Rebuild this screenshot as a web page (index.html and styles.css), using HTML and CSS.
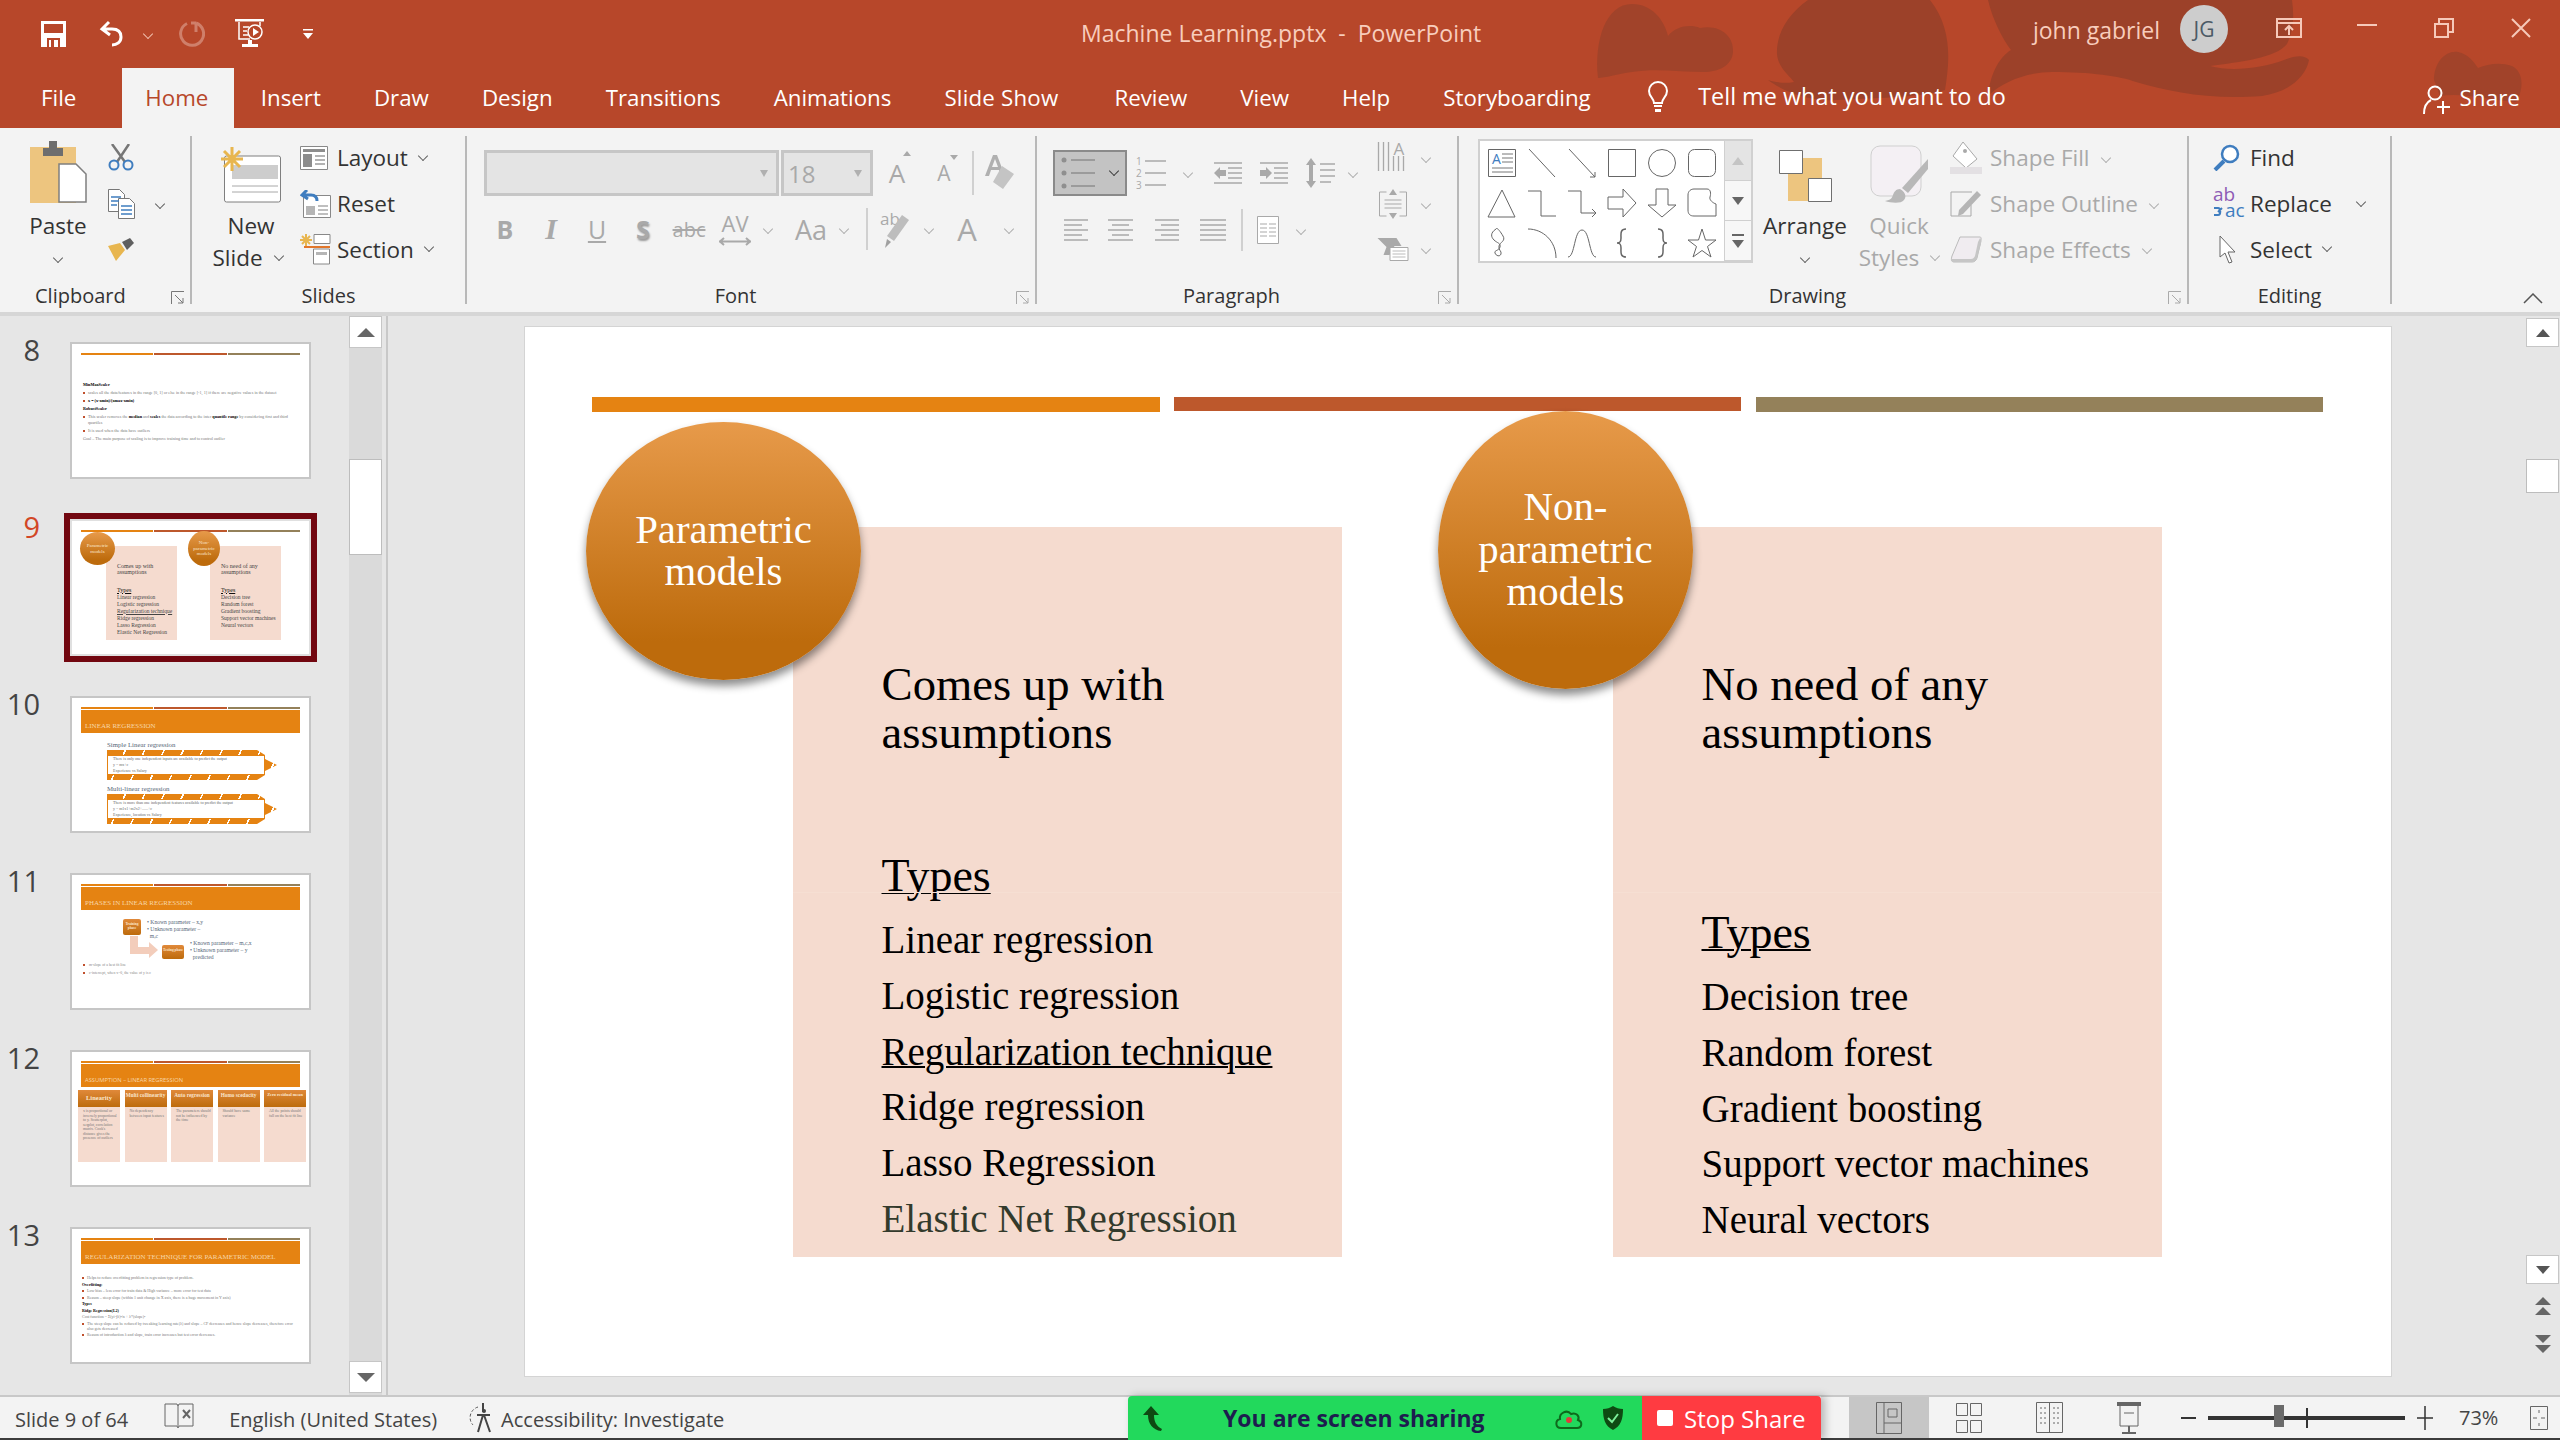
FILE: index.html
```html
<!DOCTYPE html>
<html>
<head>
  <title>Machine Learning.pptx - PowerPoint</title>
  <link rel="stylesheet" href="styles.css">
</head>
<body>
<div class="app">

  <!-- red header -->
  <header class="head">
    <svg class="head-art" width="2560" height="128" viewBox="0 0 2560 128">
      <path fill="#a1432a" d="M1598 78C1594 40 1606 4 1632 4C1652 4 1664 20 1668 36C1676 26 1690 24 1700 28C1720 24 1734 36 1733 52C1732 66 1718 72 1704 72C1680 72 1656 68 1632 72C1618 74 1604 78 1598 78Z"/>
      <path fill="#9c4129" d="M1808 0C1788 14 1776 34 1777 54C1778 68 1790 76 1794 82C1784 84 1774 82 1768 80C1784 92 1812 102 1836 100C1870 98 1918 98 1945 90C1950 60 1952 28 1930 0Z"/>
      <path fill="#9c4129" d="M1988 0C1992 18 2002 38 2011 50C1998 58 1990 76 1988 96C2004 80 2030 72 2052 72C2090 72 2120 76 2136 82C2170 92 2210 100 2262 96C2290 92 2306 76 2309 60C2304 54 2294 56 2284 60C2262 68 2232 72 2210 66C2240 62 2276 58 2287 44C2294 30 2294 14 2292 0Z"/>
      <path fill="#a1432a" d="M2434 80C2434 62 2446 50 2458 52C2468 54 2474 62 2478 68C2488 64 2500 62 2512 66C2524 72 2524 90 2516 102C2490 100 2462 92 2440 96Z"/>
    </svg>
    <div class="title-row">
      <div class="qat">
        <svg class="q-save" width="25" height="26" viewBox="0 0 25 26"><path fill="#fff" d="M0 0h25v26H0z"/><path fill="#b7472a" d="M3 3h19v9H3zM6 17h13v9h-2v-7H8v7H6z"/><path fill="#b7472a" d="M10 19h3v7h-3z"/></svg>
        <svg class="q-undo" width="26" height="27" viewBox="0 0 26 27"><path fill="none" stroke="#fff" stroke-width="3" d="M10 2 3 9l8 6M4 9h9c6 0 9 3 9 8s-4 8-9 8"/></svg>
        <i class="chev light q-chev"></i>
        <svg class="q-redo" width="27" height="27" viewBox="0 0 27 27"><path fill="none" stroke="#cf7f6a" stroke-width="3" d="M18 3a11.500 11.500 0 1 1-9 .5M18 3v9M18 3h-5"/></svg>
        <svg class="q-show" width="30" height="29" viewBox="0 0 30 29"><path fill="#fff" d="M0 0h29v2.500H0zM7 25h16v3H7zM13 21h4v5h-4z"/><path fill="none" stroke="#fff" stroke-width="1.500" d="M4 3v17h11M25 3v4M8 8h6M8 12h4M8 16h5"/><circle cx="20" cy="13" r="7" fill="#b7472a" stroke="#fff" stroke-width="1.500"/><path fill="#fff" d="m18 9 6 4-6 4z"/></svg>
        <svg class="q-more" width="10" height="10" viewBox="0 0 10 10"><path fill="#fff" d="M0 0h10v1.500H0zM0 4h10l-5 6z"/></svg>
      </div>
      <div class="doc-title">Machine Learning.pptx&nbsp; -&nbsp; PowerPoint</div>
      <div class="user-name">john gabriel</div>
      <div class="avatar">JG</div>
      <svg class="w-display" width="26" height="20" viewBox="0 0 26 20"><path fill="none" stroke="#f6c9b9" stroke-width="2" d="M1 1h24v18H1zM1 5h24M13 17V9M9 12l4-4 4 4"/></svg>
      <svg class="w-min" width="20" height="2" viewBox="0 0 20 2"><path fill="#f6c9b9" d="M0 0h20v2H0z"/></svg>
      <svg class="w-restore" width="20" height="20" viewBox="0 0 20 20"><path fill="none" stroke="#f6c9b9" stroke-width="2" d="M1 6h13v13H1zM5 6V1h14v13h-5"/></svg>
      <svg class="w-close" width="20" height="20" viewBox="0 0 20 20"><path stroke="#f6c9b9" stroke-width="2" d="m1 1 18 18M19 1 1 19"/></svg>
    </div>
    <nav class="tabs">
      <span class="tab tab-file">File</span>
      <span class="tab active">Home</span>
      <span class="tab">Insert</span>
      <span class="tab">Draw</span>
      <span class="tab">Design</span>
      <span class="tab">Transitions</span>
      <span class="tab">Animations</span>
      <span class="tab tab-show">Slide Show</span>
      <span class="tab">Review</span>
      <span class="tab">View</span>
      <span class="tab">Help</span>
      <span class="tab">Storyboarding</span>
      <svg class="bulb" width="20" height="31" viewBox="0 0 20 31"><path fill="none" stroke="#fff" stroke-width="2" d="M6 22c0-5-5-6-5-12a9 9 0 0 1 18 0c0 6-5 7-5 12z"/><path fill="#fff" d="M6 24h8v2H6zM7 28h6v3H7z"/></svg>
      <span class="tell">Tell me what you want to do</span>
      <svg class="share-ic" width="27" height="29" viewBox="0 0 27 29"><circle cx="12" cy="8" r="6.500" fill="none" stroke="#fff" stroke-width="2"/><path fill="none" stroke="#fff" stroke-width="2" d="M1 29c0-8 3-12 7-14M14 22h13M20 16v13"/></svg>
      <span class="share">Share</span>
    </nav>
  </header>

  <!-- ribbon -->
  <section class="ribbon">

    <div class="group g-clip">
      <div class="body">
        <div class="big big-paste">
          <div class="big-ic">
            <svg width="57" height="62" viewBox="0 0 57 62"><path fill="#edc57f" d="M0 6h46v56H0z"/><path fill="#6e6e6e" d="M13 7h20v8H13zM19 0h8v8h-8z"/><path fill="#fff" stroke="#7f7f7f" stroke-width="1.500" d="M29 23h17l10 10v28H29z"/></svg>
          </div>
          <div class="big-label">Paste</div>
          <div class="big-label"><i class="chev"></i></div>
        </div>
        <div class="rows">
          <div class="row"><svg class="ic-clip" width="26" height="27" viewBox="0 0 26 27"><path fill="none" stroke="#767676" stroke-width="2.500" d="M4 0l13 18M21 0 9 18"/><circle cx="6" cy="21" r="4.500" fill="none" stroke="#3f7dbf" stroke-width="2"/><circle cx="20" cy="21" r="4.500" fill="none" stroke="#3f7dbf" stroke-width="2"/></svg></div>
          <div class="row"><svg class="ic-clip" width="28" height="30" viewBox="0 0 28 30"><path fill="#fff" stroke="#777" d="M.5.500h11l5 5v17H.5z"/><path fill="#fff" stroke="#777" d="M10.500 9.500h11l5 5v15h-16z"/><path stroke="#3f7dbf" stroke-width="1.500" d="M3 8h10M3 12h8M3 16h6M13 17h11M13 21h11M13 25h11"/></svg><i class="chev chev-copy"></i></div>
          <div class="row"><svg class="ic-clip" width="27" height="23" viewBox="0 0 27 23"><path fill="#e8b64f" d="M0 8l12-3 5 7-9 11z"/><path fill="#5f5f5f" d="m14 4 8-4 4 5-7 7z"/></svg></div>
        </div>
      </div>
      <div class="label">Clipboard<svg class="launch" width="14" height="14" viewBox="0 0 14 14"><path fill="none" stroke="#777" d="M.5 13V.5H13M4 4l8 8M12 7v5H7"/></svg></div>
    </div>

    <div class="group g-slides">
      <div class="body">
        <div class="big big-new">
          <div class="big-ic">
            <svg width="62" height="56" viewBox="0 0 62 56"><rect x="4.500" y="9" width="56" height="46" rx="2" fill="#fff" stroke="#7f7f7f"/><path fill="#cdcdcd" d="M12 18h46v14H12z"/><path stroke="#a8a8a8" d="M12 39h46M12 45h46"/><path stroke="#e8b64f" stroke-width="3" d="M12 0v24M1 12h22M4 4l16 16M20 4 4 20"/></svg>
          </div>
          <div class="big-label">New</div>
          <div class="big-label">Slide<i class="chev chev-inl"></i></div>
        </div>
        <div class="rows">
          <div class="row"><span class="ic-box"><svg width="28" height="24" viewBox="0 0 28 24"><path fill="#fff" stroke="#888" d="M.5.500h27v23H.5z"/><path fill="#8d8d8d" d="M3 3h22v3H3zM3 8h9v13H3z"/><path stroke="#9a9a9a" stroke-width="1.500" d="M15 10h10M15 14h10M15 18h10"/></svg></span><span class="txt">Layout</span><i class="chev"></i></div>
          <div class="row"><span class="ic-box"><svg width="31" height="28" viewBox="0 0 31 28"><path fill="#fff" stroke="#888" d="M3.500 5.500h27v22h-27z"/><path fill="#b5b5b5" d="M6 16h9v9H6z"/><path stroke="#aaa" stroke-width="1.500" d="M18 16h10M18 20h10M18 24h10"/><path fill="none" stroke="#3f7dbf" stroke-width="3" d="M7 0 2 5l6 4M3 5h8c4 0 6 2 6 6"/></svg></span><span class="txt">Reset</span></div>
          <div class="row"><span class="ic-box"><svg width="31" height="31" viewBox="0 0 31 31"><path stroke="#e8b64f" stroke-width="2" d="M6 0v13M0 6h12M2 2l8 8M10 2 2 10"/><path fill="#fff" stroke="#888" d="M14 .5h16v9H14zM13.500 15h16v15h-16z"/><path fill="#b5b5b5" d="M16 18h11v3H16z"/><path stroke="#e2762a" stroke-width="2" d="M4 13h26"/></svg></span><span class="txt">Section</span><i class="chev"></i></div>
        </div>
      </div>
      <div class="label">Slides</div>
    </div>

    <div class="group g-font off">
      <div class="body">
        <div class="f-row f-top">
          <div class="combo c-font"><i class="tri"></i></div>
          <div class="combo c-size"><span>18</span><i class="tri"></i></div>
          <span class="f-a a-grow">A<i class="up"></i></span>
          <span class="f-a a-shrink">A<i class="dn"></i></span>
          <span class="vsep vs-top"></span>
          <svg class="a-clear" width="32" height="36" viewBox="0 0 32 36"><path fill="#b0b0b0" d="M11 0h4l8 21h-4l-2-6H9l-2 6H3zM10 12h6l-3-8z"/><path fill="#c4c4c4" d="M20 11l12 8-11 15-10-7z"/></svg>
        </div>
        <div class="f-row f-bot">
          <b class="fb">B</b><i class="fb fb-i">I</i><u class="fb">U</u><b class="fb fb-s">S</b><s class="fb fb-abc">abc</s>
          <span class="fb fb-av">AV<svg width="32" height="9" viewBox="0 0 32 9"><path fill="none" stroke="#a9a9a9" stroke-width="2" d="M0 4.500h32M5 1 1 4.500 5 8M27 1l4 3.500L27 8"/></svg></span>
          <i class="chev chev-f"></i>
          <span class="fb fb-aa">Aa</span>
          <i class="chev chev-f"></i>
          <span class="vsep vs-bot"></span>
          <svg class="fb-pen" width="30" height="38" viewBox="0 0 30 38"><text x="0" y="15" font-family="Open Sans" font-size="17" fill="#a9a9a9">ab</text><path fill="#bdbdbd" d="M22 5l7 5-15 21-7-5z"/><path fill="#a0a0a0" d="M7 29l4 3-6 6z"/></svg>
          <i class="chev chev-f chev-pen"></i>
          <span class="fb fb-a2">A</span>
          <i class="chev chev-f chev-pen"></i>
        </div>
      </div>
      <div class="label">Font<svg class="launch" width="14" height="14" viewBox="0 0 14 14"><path fill="none" stroke="#aaa" d="M.5 13V.5H13M4 4l8 8M12 7v5H7"/></svg></div>
    </div>

    <div class="group g-para off">
      <div class="body">
        <div class="p-left">
          <div class="p-row p-top">
            <div class="bullets">
              <svg width="40" height="34" viewBox="0 0 40 34"><circle cx="3" cy="4" r="2.500" fill="#8f8f8f"/><circle cx="3" cy="17" r="2.500" fill="#8f8f8f"/><circle cx="3" cy="30" r="2.500" fill="#8f8f8f"/><path stroke="#8f8f8f" stroke-width="1.500" d="M10 4h24M10 17h24M10 30h24"/></svg>
              <i class="chev chev-dark"></i>
            </div>
            <svg class="p-num" width="30" height="34" viewBox="0 0 30 34"><text x="0" y="9" font-family="Open Sans" font-size="10" fill="#a9a9a9">1</text><text x="0" y="21" font-family="Open Sans" font-size="10" fill="#a9a9a9">2</text><text x="0" y="33" font-family="Open Sans" font-size="10" fill="#a9a9a9">3</text><path stroke="#a9a9a9" stroke-width="1.500" d="M9 5h21M9 17h21M9 29h21"/></svg>
            <i class="chev chev-p c1"></i>
            <svg class="p-dec" width="28" height="22" viewBox="0 0 28 22"><path stroke="#a9a9a9" stroke-width="1.500" d="M0 1h28M14 6h14M14 11h14M14 16h14M0 21h28"/><path fill="#a9a9a9" d="M0 11l6-6v3h6v6H6v3z"/></svg>
            <svg class="p-inc" width="28" height="22" viewBox="0 0 28 22"><path stroke="#a9a9a9" stroke-width="1.500" d="M0 1h28M14 6h14M14 11h14M14 16h14M0 21h28"/><path fill="#a9a9a9" d="M12 11 6 5v3H0v6h6v3z"/></svg>
            <svg class="p-sp" width="29" height="30" viewBox="0 0 29 30"><path fill="#a9a9a9" d="M5 0l5 7H7v16h3l-5 7-5-7h3V7H0z"/><path stroke="#a9a9a9" stroke-width="1.500" d="M14 6h15M14 12h15M14 18h15M14 24h11"/></svg>
            <i class="chev chev-p c2"></i>
          </div>
          <div class="p-row p-bot">
            <svg class="al a1" width="24" height="22" viewBox="0 0 24 22"><path stroke="#a9a9a9" stroke-width="1.500" d="M0 1h24M0 6h18M0 11h24M0 16h18M0 21h24"/></svg>
            <svg class="al a2" width="25" height="22" viewBox="0 0 25 22"><path stroke="#a9a9a9" stroke-width="1.500" d="M0 1h25M4 6h17M0 11h25M4 16h17M0 21h25"/></svg>
            <svg class="al a3" width="24" height="22" viewBox="0 0 24 22"><path stroke="#a9a9a9" stroke-width="1.500" d="M0 1h24M6 6h18M0 11h24M6 16h18M0 21h24"/></svg>
            <svg class="al a4" width="26" height="22" viewBox="0 0 26 22"><path stroke="#a9a9a9" stroke-width="1.500" d="M0 1h26M0 6h26M0 11h26M0 16h26M0 21h26"/></svg>
            <span class="vsep vs-p"></span>
            <svg class="al a5" width="22" height="28" viewBox="0 0 22 28"><path fill="#fff" stroke="#a9a9a9" d="M.5.500h21v27H.5z"/><path stroke="#a9a9a9" d="M3 8h7M3 12h7M3 16h7M3 20h7M12 8h7M12 12h7M12 16h7M12 20h7"/></svg>
            <i class="chev chev-p c3"></i>
          </div>
        </div>
        <div class="rows p-rows">
          <div class="row"><svg class="ic-p" width="31" height="32" viewBox="0 0 31 32"><path stroke="#a9a9a9" stroke-width="1.300" d="M1 0v29M6 0v29M11 0v29M16 14v15M21 14v15M26 14v15"/><text x="16" y="13" font-family="Open Sans" font-size="17" fill="#a9a9a9">A</text></svg><i class="chev chev-pr"></i></div>
          <div class="row"><svg class="ic-p" width="29" height="30" viewBox="0 0 29 30"><path fill="none" stroke="#a9a9a9" d="M8 3H1v24h7M21 3h7v24h-7"/><path stroke="#a9a9a9" d="M6 11h17M6 15h17M6 19h17"/><path fill="#a9a9a9" d="m14.500 0 4 6h-8zM14.500 30l4-6h-8z"/></svg><i class="chev chev-pr"></i></div>
          <div class="row"><svg class="ic-p" width="31" height="23" viewBox="0 0 31 23"><path fill="#a9a9a9" d="M0 0h19l5 8h-7l-5 9H6l3-8z"/><path fill="#fff" stroke="#a9a9a9" d="M12.500 9.500h18v13h-18z"/><path stroke="#bbb" d="M15 13h13M15 16h13M15 19h13"/></svg><i class="chev chev-pr"></i></div>
        </div>
      </div>
      <div class="label">Paragraph<svg class="launch" width="14" height="14" viewBox="0 0 14 14"><path fill="none" stroke="#aaa" d="M.5 13V.5H13M4 4l8 8M12 7v5H7"/></svg></div>
    </div>

    <div class="group g-draw">
      <div class="body">
        <div class="gallery">
          <div class="shapes">
            <svg class="sh" viewBox="0 0 30 30"><path fill="#fff" stroke="#666" d="M1.500 1.500h27v27h-27z"/><text x="5" y="16" font-family="Open Sans" font-size="14" fill="#3f7dbf">A</text><path stroke="#777" d="M15 6h11M15 10h11M15 14h11M5 20h21M5 24h21"/></svg>
            <svg class="sh" viewBox="0 0 30 30"><path stroke="#666" d="m2 1 26 28"/></svg>
            <svg class="sh" viewBox="0 0 30 30"><path fill="none" stroke="#666" d="m2 1 26 28M28 24v5h-5"/></svg>
            <svg class="sh" viewBox="0 0 30 30"><path fill="none" stroke="#666" d="M1.500 1.500h27v27h-27z"/></svg>
            <svg class="sh" viewBox="0 0 30 30"><circle cx="15" cy="15" r="13.500" fill="none" stroke="#666"/></svg>
            <svg class="sh" viewBox="0 0 30 30"><rect x="1.500" y="1.500" width="27" height="27" rx="6" fill="none" stroke="#666"/></svg>
            <svg class="sh" viewBox="0 0 30 30"><path fill="none" stroke="#666" d="M15 2 28 29H1z"/></svg>
            <svg class="sh" viewBox="0 0 30 30"><path fill="none" stroke="#666" d="M1 3h13v25h15"/></svg>
            <svg class="sh" viewBox="0 0 30 30"><path fill="none" stroke="#666" d="M1 3h13v22h15M25 21l4 4-4 4"/></svg>
            <svg class="sh" viewBox="0 0 30 30"><path fill="none" stroke="#666" d="M1 9h15V1l13 14-13 14v-8H1z"/></svg>
            <svg class="sh" viewBox="0 0 30 30"><path fill="none" stroke="#666" d="M9 1h12v16h8L15 29 1 17h8z"/></svg>
            <svg class="sh" viewBox="0 0 30 30"><path fill="none" stroke="#666" d="M7 1h13c4 0 4 5 3 8s3 6 6 7v12H7c-4 0-6-2-6-6V7c0-4 3-6 6-6z"/></svg>
            <svg class="sh" viewBox="0 0 30 30"><path fill="none" stroke="#666" d="M9 1c-6 4-5 8-2 11s7 3 6 7-6 3-5 6 5 4 6 1-3-4-2-8 7-5 4-10-6-9-7-7z"/></svg>
            <svg class="sh" viewBox="0 0 30 30"><path fill="none" stroke="#666" d="M1 1c15 0 28 12 28 29"/></svg>
            <svg class="sh" viewBox="0 0 30 30"><path fill="none" stroke="#666" d="M1 29C8 29 7 2 15 2s7 27 14 27"/></svg>
            <svg class="sh" viewBox="0 0 30 30"><path fill="none" stroke="#666" stroke-width="1.500" d="M19 1c-6 0-5 5-5 9s-1 5-4 5c3 0 4 1 4 5s-1 9 5 9"/></svg>
            <svg class="sh" viewBox="0 0 30 30"><path fill="none" stroke="#666" stroke-width="1.500" d="M11 1c6 0 5 5 5 9s1 5 4 5c-3 0-4 1-4 5s1 9-5 9"/></svg>
            <svg class="sh" viewBox="0 0 30 30"><path fill="none" stroke="#666" d="m15 1 3.500 11H29l-8.500 6.500L24 29l-9-6.500L6 29l3.500-10.500L1 12h10.500z"/></svg>
          </div>
          <div class="g-scroll">
            <span class="gs gs-up"><svg width="12" height="8" viewBox="0 0 12 8"><path fill="#c4c4c4" d="M0 8 6 0l6 8z"/></svg></span>
            <span class="gs"><svg width="12" height="8" viewBox="0 0 12 8"><path fill="#666" d="m0 0 6 8 6-8z"/></svg></span>
            <span class="gs"><svg width="12" height="14" viewBox="0 0 12 14"><path fill="#666" d="M0 0h12v2H0zM0 6h12l-6 8z"/></svg></span>
          </div>
        </div>
        <div class="big big-arr">
          <div class="big-ic">
            <svg width="55" height="54" viewBox="0 0 55 54"><path fill="#edc57f" d="M24 9h20v25H24zM10 25h21v27H10z"/><path fill="#fff" stroke="#6f6f6f" d="M1.500 1.500h23v23h-23zM30.500 29.500h23v23h-23z"/></svg>
          </div>
          <div class="big-label">Arrange</div>
          <div class="big-label"><i class="chev"></i></div>
        </div>
        <div class="big big-quick off">
          <div class="big-ic">
            <svg width="58" height="58" viewBox="0 0 58 58"><rect x="1" y="1" width="50" height="50" rx="9" fill="#f4f0f4" stroke="#cfcfcf"/><path fill="#b8b8b8" d="M58 14v10L38 48l-6-5z"/><path fill="#b8b8b8" d="M30 44c5 3 7 7 4 11s-13 3-19 1c6-1 7-3 8-6s3-6 7-6z"/></svg>
          </div>
          <div class="big-label">Quick</div>
          <div class="big-label">Styles<i class="chev chev-inl"></i></div>
        </div>
        <div class="rows r-shape off">
          <div class="row"><span class="ic-box2"><svg width="32" height="33" viewBox="0 0 32 33"><path fill="#fff" stroke="#a9a9a9" d="M13 1l14 17-11 9L3 15z"/><circle cx="15" cy="10" r="2" fill="#a9a9a9"/><path fill="#e3e0e3" d="M0 26h32v7H0z"/></svg></span><span class="txt">Shape Fill</span><i class="chev c-fill"></i></div>
          <div class="row"><span class="ic-box2"><svg width="32" height="26" viewBox="0 0 32 26"><path fill="none" stroke="#a9a9a9" d="M22 1H1v24h20V14"/><path fill="#b5b5b5" d="M27 0l4 4-18 19-5 2 1-6z"/></svg></span><span class="txt">Shape Outline</span><i class="chev c-out"></i></div>
          <div class="row"><span class="ic-box2"><svg width="32" height="27" viewBox="0 0 32 27"><path fill="#f0ecf0" stroke="#bbb" d="M10 1h20c2 0 1 4 0 8l-3 13c-1 3-3 4-5 4H4c-3 0-3-3-2-6z"/><path fill="#c6c6c6" d="M30 2c2 2 1 6 0 9l-3 11c-1 3-3 4-5 4H4c-2 0-3-1-3-3h20c2 0 3-1 4-3l3-14z"/></svg></span><span class="txt">Shape Effects</span><i class="chev c-eff"></i></div>
        </div>
      </div>
      <div class="label">Drawing<svg class="launch" width="14" height="14" viewBox="0 0 14 14"><path fill="none" stroke="#aaa" d="M.5 13V.5H13M4 4l8 8M12 7v5H7"/></svg></div>
    </div>

    <div class="group g-edit">
      <div class="body">
        <div class="rows">
          <div class="row"><span class="ic-box3"><svg width="27" height="27" viewBox="0 0 27 27"><circle cx="17" cy="10" r="8" fill="#fff" stroke="#3f7dbf" stroke-width="2.500"/><path stroke="#3f7dbf" stroke-width="4" d="M11 17 2 26"/></svg></span><span class="txt">Find</span></div>
          <div class="row"><span class="ic-box3 abac"><b class="ab">ab</b><svg width="11" height="11" viewBox="0 0 11 11"><path fill="none" stroke="#3f7dbf" stroke-width="2" d="M1 2h4c3 0 3 7 0 7H1M5 6l4-4"/></svg><b class="ac">ac</b></span><span class="txt">Replace</span><i class="chev c-rep"></i></div>
          <div class="row"><span class="ic-box3"><svg class="ic-sel" width="18" height="29" viewBox="0 0 18 29"><path fill="#fff" stroke="#666" d="M1 1v21l5-4 4 10 3-1-4-10h7z"/></svg></span><span class="txt">Select</span><i class="chev c-sel"></i></div>
        </div>
      </div>
      <div class="label">Editing</div>
    </div>

    <svg class="collapse" width="20" height="11" viewBox="0 0 20 11"><path fill="none" stroke="#555" stroke-width="1.500" d="m1 10 9-9 9 9"/></svg>
  </section>

  <main class="main">

    <!-- slide thumbnails -->
    <aside class="panel">
      <div class="thumbs">

        <div class="t-row">
          <span class="num">8</span>
          <div class="thumb">
            <div class="t-bars"><i></i><i></i><i></i></div>
            <div class="t-text t8">
              <p><b>MinMaxScaler</b></p>
              <p class="dot">scales all the data/features in the range [0, 1] or else in the range [-1, 1] if there are negative values in the dataset</p>
              <p class="dot"><b>x = (x-xmin)/(xmax-xmin)</b></p>
              <p><b>RobustScaler</b></p>
              <p class="dot">This scaler removes the <b>median</b> and <b>scales</b> the data according to the inter <b>quantile range</b> by considering first and third quartiles</p>
              <p class="dot">It is used when the data have outliers</p>
              <p>Goal – The main purpose of scaling is to improve training time and to control outlier</p>
            </div>
          </div>
        </div>

        <div class="t-row">
          <span class="num cur">9</span>
          <div class="thumb selected">
            <div class="t-bars"><i></i><i></i><i></i></div>
            <div class="m-pink mp1">
              <p class="m-big">Comes up with<br>assumptions</p>
              <p class="m-type m-t1">Types</p>
              <p>Linear regression</p><p>Logistic regression</p><p><u>Regularization technique</u></p><p>Ridge regression</p><p>Lasso Regression</p><p>Elastic Net Regression</p>
            </div>
            <div class="m-pink mp2">
              <p class="m-big">No need of any<br>assumptions</p>
              <p class="m-type m-t2">Types</p>
              <p>Decision tree</p><p>Random forest</p><p>Gradient boosting</p><p>Support vector machines</p><p>Neural vectors</p>
            </div>
            <div class="m-circle mc1">Parametric<br>models</div>
            <div class="m-circle mc2">Non-<br>parametric<br>models</div>
          </div>
        </div>

        <div class="t-row">
          <span class="num">10</span>
          <div class="thumb">
            <div class="t-bars"><i></i><i></i><i></i></div>
            <div class="t-head">LINEAR REGRESSION</div>
            <div class="t10">
              <p class="t10-h">Simple Linear regression</p>
              <div class="band"><div class="band-in"><p>There is only one independent inputs are available to predict the output</p><p>y = mx+c</p><p>Experience vs Salary</p></div></div>
              <p class="t10-h t10-h2">Multi-linear regression</p>
              <div class="band band2"><div class="band-in"><p>There is more than one independent features available to predict the output</p><p>y = m1x1+m2x2+......+c</p><p>Experience, location vs Salary</p></div></div>
            </div>
          </div>
        </div>

        <div class="t-row">
          <span class="num">11</span>
          <div class="thumb">
            <div class="t-bars"><i></i><i></i><i></i></div>
            <div class="t-head">PHASES IN LINEAR REGRESSION</div>
            <div class="t11">
              <div class="t11-r"><span class="phase">Training phase</span><div class="t11-l"><p>• Known parameter – x,y</p><p>• Unknown parameter –<br>&nbsp;&nbsp;m,c</p></div></div>
              <div class="t11-r t11-r2"><svg width="28" height="22" viewBox="0 0 28 22"><path fill="#f3cdbb" d="M0 0h8v11h11V6l9 8-9 8v-4H0z"/></svg><span class="phase">Testing phase</span><div class="t11-l"><p>• Known parameter – m,c,x</p><p>• Unknown parameter – y<br>&nbsp;&nbsp;predicted</p></div></div>
              <p class="t11-n dot">m-slope of a best fit line</p>
              <p class="t11-n dot">c-intercept, when x=0, the value of y is c</p>
            </div>
          </div>
        </div>

        <div class="t-row">
          <span class="num">12</span>
          <div class="thumb">
            <div class="t-bars"><i></i><i></i><i></i></div>
            <div class="t-head t-head-sans">ASSUMPTION – LINEAR REGRESSION</div>
            <div class="t12">
              <div class="col"><h5 class="h-big">Linearity</h5><p>x is proportional or inversely proportional to y. Scatterplot, seqplot, correlation matrix. Cook's distance gives the presence of outliers</p></div>
              <div class="col"><h5>Multi collinearity</h5><p>No dependency between input features</p></div>
              <div class="col"><h5>Auto regression</h5><p>The parameters should not be influenced by the time</p></div>
              <div class="col"><h5>Homo scedacity</h5><p>Should have same variance</p></div>
              <div class="col"><h5 class="h-small">Zero residual mean</h5><p>All the points should fall on the best fit line</p></div>
            </div>
          </div>
        </div>

        <div class="t-row">
          <span class="num">13</span>
          <div class="thumb">
            <div class="t-bars"><i></i><i></i><i></i></div>
            <div class="t-head">REGULARIZATION TECHNIQUE FOR PARAMETRIC MODEL</div>
            <div class="t-text t13">
              <p class="dot">Helps to reduce overfitting problem in regression type of problem.</p>
              <p><b>Overfitting:</b></p>
              <p class="dot">Low bias – less error for train data &amp; High variance – more error for test data</p>
              <p class="dot">Reason – steep slope (within 1 unit change in X axis, there is a huge movement in Y axis)</p>
              <p><b>Types</b></p>
              <p><b>Ridge Regression(L2)</b></p>
              <p>Cost function = Σ(yi-ŷi)²/n + λ*(slope)²</p>
              <p class="dot">The steep slope can be reduced by tweaking learning rate(λ) and slope – CF decreases and hence slope decreases, therefore error also gets decreased</p>
              <p class="dot">Reason of introduction λ and slope, train error increases but test error decreases.</p>
            </div>
          </div>
        </div>

      </div>
      <div class="vbar">
        <span class="vb-btn"><svg width="18" height="9" viewBox="0 0 18 9"><path fill="#666" d="M0 9 9 0l9 9z"/></svg></span>
        <span class="vb-thumb"></span>
        <span class="vb-btn vb-down"><svg width="18" height="9" viewBox="0 0 18 9"><path fill="#666" d="m0 0 9 9 9-9z"/></svg></span>
      </div>
    </aside>

    <!-- current slide -->
    <div class="stage">
      <div class="slide">
        <div class="bars"><i class="b1"></i><i class="b2"></i><i class="b3"></i></div>

        <div class="pink pink-l">
          <p class="lead">Comes up with<br>assumptions</p>
          <p class="types">Types</p>
          <ul class="list">
            <li>Linear regression</li>
            <li>Logistic regression</li>
            <li><u>Regularization technique</u></li>
            <li>Ridge regression</li>
            <li>Lasso Regression</li>
            <li class="soft">Elastic Net Regression</li>
          </ul>
        </div>
        <div class="pink pink-r">
          <p class="lead">No need of any<br>assumptions</p>
          <p class="types">Types</p>
          <ul class="list">
            <li>Decision tree</li>
            <li>Random forest</li>
            <li>Gradient boosting</li>
            <li>Support vector machines</li>
            <li>Neural vectors</li>
          </ul>
        </div>

        <div class="circle circle-l">Parametric<br>models</div>
        <div class="circle circle-r">Non-<br>parametric<br>models</div>
      </div>

      <div class="sbar">
        <span class="sb-btn"><svg width="14" height="8" viewBox="0 0 14 8"><path fill="#555" d="M0 8 7 0l7 8z"/></svg></span>
        <span class="sb-thumb"></span>
        <span class="sb-btn sb-down"><svg width="14" height="8" viewBox="0 0 14 8"><path fill="#555" d="m0 0 7 8 7-8z"/></svg></span>
        <svg class="sb-pg" width="16" height="18" viewBox="0 0 16 18"><path fill="#666" d="M0 8 8 0l8 8zM0 18l8-8 8 8z"/></svg>
        <svg class="sb-pg sb-pg2" width="16" height="18" viewBox="0 0 16 18"><path fill="#666" d="m0 0 8 8 8-8zM0 10l8 8 8-8z"/></svg>
      </div>
    </div>
  </main>

  <footer class="status">
    <span class="st-count">Slide 9 of 64</span>
    <svg class="st-notes" width="30" height="28" viewBox="0 0 30 28"><path fill="none" stroke="#666" d="M1 2h12l1 2 1-2h14v22H15l-1 2-1-2H1zM14 4v20"/><path stroke="#666" stroke-width="2" d="m19 8 7 8M26 8l-7 8"/></svg>
    <span class="st-lang">English (United States)</span>
    <svg class="st-acc" width="29" height="30" viewBox="0 0 29 30"><path fill="none" stroke="#555" stroke-dasharray="3 2" d="M9 4a11 11 0 0 0-5 18"/><path stroke="#444" stroke-width="2" d="M14 0v9M8 12h13M14 12l-5 17M15 12l6 17"/><circle cx="15" cy="8" r="2" fill="#444"/></svg>
    <span class="st-acc-t">Accessibility: Investigate</span>

    <div class="views">
      <span class="view on"><svg width="26" height="32" viewBox="0 0 26 32"><path fill="none" stroke="#666" d="M.5.500h25v31H.5zM8 .5v31M8 21h18M12 7h9v8h-9z"/></svg></span>
      <span class="view"><svg width="26" height="30" viewBox="0 0 26 30"><path fill="none" stroke="#666" d="M.5.500h11v12H.5zM14.500.5h11v12h-11zM.5 17.500h11v12H.5zM14.500 17.500h11v12h-11z"/></svg></span>
      <span class="view"><svg width="27" height="32" viewBox="0 0 27 32"><path fill="none" stroke="#666" d="M.5.500h26v30h-26zM13.500.5v30"/><path stroke="#666" stroke-dasharray="2 2" d="M4 6h6M4 11h6M4 16h6M4 21h6M17 6h6M17 11h6M17 16h6M17 21h6"/></svg></span>
      <span class="view"><svg width="24" height="32" viewBox="0 0 24 32"><path fill="#666" d="M0 0h24v4H0zM5 30h14v2H5zM11 24h2v7h-2z"/><path fill="none" stroke="#666" d="M3 4v20h18V4M7 11h10"/></svg></span>
    </div>
    <div class="zoomer">
      <i class="z-minus"></i>
      <div class="z-track"><i class="z-thumb"></i><i class="z-tick"></i></div>
      <svg class="z-plus" width="16" height="24" viewBox="0 0 16 24"><path stroke="#333" stroke-width="1.500" d="M0 12h16M8 0v24"/></svg>
      <span class="z-pct">73%</span>
      <svg class="z-fit" width="18" height="24" viewBox="0 0 18 24"><path fill="none" stroke="#666" d="M.5.500h17v23H.5zM3 12h4M11 12h4M9 4v3M9 17v3"/></svg>
    </div>

    <!-- zoom share bar sits over the status bar -->
    <div class="sharebar">
      <div class="sb-green">
        <svg class="sg-arrow" width="20" height="25" viewBox="0 0 20 25"><path fill="#0e4a12" d="M8 0l8 9h-5c0 6 2 11 8 14l-1 2C10 24 5 18 5 9H0z"/></svg>
        <span class="sg-text">You are screen sharing</span>
        <svg class="sg-cloud" width="28" height="24" viewBox="0 0 28 24"><path fill="none" stroke="#0e6a1c" stroke-width="2" d="M6 22C0 22 0 14 5 13c-1-6 7-10 11-5 5-2 9 2 7 6 5 2 4 8-1 8z"/><circle cx="14" cy="14" r="3" fill="#e23a3a"/></svg>
        <svg class="sg-shield" width="20" height="24" viewBox="0 0 20 24"><path fill="#0e4a12" d="M10 0c3 2 6 3 10 3 0 10-2 17-10 21C2 20 0 13 0 3c4 0 7-1 10-3z"/><path fill="none" stroke="#7cf09a" stroke-width="2" d="m5 12 4 4 6-8"/></svg>
      </div>
      <div class="sb-red"><i class="stop-sq"></i><span>Stop Share</span></div>
    </div>
  </footer>
</div>
</body>
</html>
```

FILE: styles.css
```css
* { box-sizing: border-box; }
html, body { margin: 0; padding: 0; }
body { font-family: "Open Sans", sans-serif; background: #f3f3f3; color: #333; }
p, ul, h5 { margin: 0; padding: 0; }
i { font-style: normal; display: block; }

.app { width: 2560px; height: 1440px; overflow: hidden; display: flex; flex-direction: column; }

/* header */
.head { position: relative; height: 128px; background: #b7472a; }
.head-art { position: absolute; left: 0; top: 0; }
.title-row { position: relative; height: 68px; display: flex; align-items: center; }
.qat { width: 1081px; display: flex; align-items: center; padding-bottom: 1px; }
.q-save { margin-left: 41px; }
.q-undo { margin-left: 33px; }
.q-chev { margin-left: 19px; }
.q-redo { margin-left: 26px; }
.q-show { margin-left: 30px; }
.q-more { margin-left: 38px; }
.doc-title { font-size: 23px; color: #f8cdbd; white-space: nowrap; margin-top: -2px; }
.user-name { margin-left: auto; font-size: 23px; color: #f8cdbd; margin-top: -8px; }
.avatar { width: 48px; height: 48px; margin-left: 20px; border-radius: 50%; background: #cdcdcd; color: #4c5a66; font-size: 21px; display: flex; align-items: center; justify-content: center; margin-top: -10px; }
.w-display { margin-left: 48px; margin-top: -12px; }
.w-min { margin-left: 55px; margin-top: -18px; }
.w-restore { margin-left: 57px; margin-top: -12px; }
.w-close { margin-left: 57px; margin-right: 29px; margin-top: -12px; }

.tabs { position: relative; height: 60px; display: flex; align-items: stretch; color: #fff; font-size: 22.300px; }
.tab { padding: 0 26.500px; line-height: 60px; white-space: nowrap; }
.tab-file { margin-left: 14.500px; margin-right: 19.500px; }
.tab.active { background: #f3f3f3; color: #b7472a; padding: 0 26px 0 23px; }
.tab-show { margin-right: 3px; letter-spacing: .2px; }
.bulb { margin: 13px 0 0 31px; }
.tell { margin-left: 30px; font-size: 23.400px; line-height: 56px; white-space: nowrap; }
.share-ic { margin: 17px 0 0 auto; }
.share { margin: 0 40px 0 10px; line-height: 60px; font-size: 22.500px; }

/* ribbon */
.ribbon { position: relative; height: 188px; padding: 8px 0 0; display: flex; background: #f3f3f3; border-bottom: 4px solid #d6d6d6; font-size: 22.500px; color: #333; }
.group { position: relative; height: 168px; border-right: 2px solid #b8b8b8; display: flex; flex-direction: column; }
.g-clip { width: 192px; }
.g-slides { width: 275px; }
.g-font { width: 570px; }
.g-para { width: 422px; }
.g-draw { width: 730px; }
.g-edit { width: 203px; }
.body { height: 138px; display: flex; }
.label { position: relative; height: 30px; line-height: 44px; text-align: center; font-size: 20px; color: #333; white-space: nowrap; }
.launch { position: absolute; right: 5px; top: 17px; }
.g-clip .label { text-align: left; padding-left: 35px; }
.g-font .label, .g-para .label, .g-draw .label { padding-right: 31px; }

.chev { width: 8px; height: 8px; border-right: 1.500px solid #555; border-bottom: 1.500px solid #555; transform: rotate(45deg) scale(.9); flex: none; }
.chev.light { border-color: #f6c9b9; }
.off { color: #a9a9a9; }
.off .chev { border-color: #a9a9a9; }
.chev.chev-dark { border-color: #333; }
.chev-inl { display: inline-block; margin: 0 0 5px 12px; }

.big { display: flex; flex-direction: column; align-items: center; }
.big-ic { height: 75px; display: flex; align-items: flex-end; justify-content: center; padding-bottom: 7px; }
.big-label { height: 32px; line-height: 32px; display: flex; align-items: center; justify-content: center; white-space: nowrap; }
.big-paste, .big-new, .big-arr, .big-quick { margin-top: -1px; }
.big-paste { width: 84px; margin-left: 16px; }
.big-new { width: 84px; margin-left: 17px; }
.big-new .big-label:last-child { padding-right: 7px; }
.big-arr { width: 80px; margin-left: 12px; }
.big-quick { width: 80px; margin-left: 14px; }

.rows { display: flex; flex-direction: column; margin-top: -1px; }
.row { height: 45.700px; display: flex; align-items: center; white-space: nowrap; }
.g-clip .rows { margin-left: 8px; }
.chev-copy { margin-left: 20px; }
.g-slides .rows { margin-left: 7px; }
.ic-box { width: 37px; flex: none; display: flex; }
.g-slides .chev { margin-left: 11px; margin-bottom: 4px; }
.g-slides .big .chev { margin-left: 12px; margin-bottom: 5px; }

/* font group */
.f-row { display: flex; align-items: center; }
.g-font .body { flex-direction: column; }
.f-top { height: 46px; margin: 14px 0 0 17px; }
.combo { position: relative; height: 46px; background: #e4e4e4; border: 3px solid #c6c6c6; display: flex; align-items: center; }
.c-font { width: 295px; }
.c-size { width: 92px; margin-left: 2px; padding-left: 4px; font-size: 24px; }
.tri { position: absolute; right: 8px; top: 17px; border-top: 7px solid #b0b0b0; border-left: 4.500px solid transparent; border-right: 4.500px solid transparent; }
.f-a { position: relative; width: 44px; text-align: center; font-size: 26px; }
.a-grow { margin-left: 2px; }
.a-shrink { margin-left: 3px; font-size: 21px; }
.up, .dn { position: absolute; top: -4px; right: 8px; border-left: 4px solid transparent; border-right: 4px solid transparent; }
.up { border-bottom: 5px solid #a9a9a9; }
.dn { border-top: 5px solid #a9a9a9; }
.vsep { width: 2px; background: #d0d0d0; flex: none; }
.vs-top { height: 44px; margin-left: 6px; }
.a-clear { margin-left: 8px; }
.f-bot { height: 44px; margin: 11px 0 0 15px; }
.fb { width: 46px; text-align: center; font-size: 25px; flex: none; font-family: "Open Sans", sans-serif; }
.fb-i { display: inline; font-style: italic; font-family: "Liberation Serif", serif; font-size: 30px; font-weight: 700; }
.fb-s { text-shadow: 1px 2px 2px #999; }
.fb-abc { font-size: 20px; }
.fb-av { position: relative; font-size: 22px; line-height: 22px; padding-bottom: 12px; }
.fb-av svg { position: absolute; left: 7px; bottom: 0; }
.fb-aa { font-size: 27px; margin-left: 10px; }
.fb-a2 { font-size: 31px; margin-left: 5px; }
.chev-f { margin: 0 6px; }
.vs-bot { height: 42px; margin-left: 12px; }
.fb-pen { margin-left: 12px; }
.chev-pen { margin-left: 15px; }

/* paragraph group */
.p-left { width: 340px; padding-left: 16px; }
.p-row { display: flex; align-items: center; }
.p-top { height: 46px; margin-top: 14px; }
.bullets { width: 74px; height: 46px; background: #c3c3c3; border: 2px solid #8a8a8a; display: flex; align-items: center; padding-left: 6px; }
.bullets .chev { margin-left: 9px; margin-bottom: 4px; }
.p-num { margin-left: 9px; }
.chev-p { margin-left: 18px; }
.p-dec { margin-left: 22px; }
.p-inc { margin-left: 18px; }
.p-sp { margin-left: 18px; }
.chev.c2 { margin-left: 14px; }
.p-bot { height: 44px; margin-top: 12px; }
.a1 { margin-left: 11px; }
.a2 { margin-left: 20px; }
.a3 { margin-left: 22px; }
.a4 { margin-left: 21px; }
.vs-p { height: 42px; margin-left: 15px; }
.a5 { margin-left: 14px; }
.chev.c3 { margin-left: 18px; }
.ic-p { flex: none; }
.p-rows .ic-p { width: 32px; }
.chev-pr { margin-left: 13px; }

/* drawing group */
.g-draw .gallery { margin: 3px 0 0 19px; }
.gallery { width: 275px; height: 124px; display: flex; background: #fff; border: 2px solid #d0d0d0; flex: none; }
.shapes { width: 244px; padding: 2px 2px; display: grid; grid-template-columns: repeat(6, 40px); grid-auto-rows: 40px; place-items: center; }
.sh { width: 30px; height: 30px; }
.g-scroll { width: 27px; display: flex; flex-direction: column; background: #f3f3f3; }
.gs { height: 40px; display: flex; align-items: center; justify-content: center; border-left: 1px solid #d0d0d0; border-bottom: 1px solid #d0d0d0; background: #f7f7f7; }
.gs-up { background: #e4e4e4; }
.r-shape { margin-left: 11px; }
.ic-box2 { width: 40px; flex: none; display: flex; }
.c-fill { margin-left: 12px; }
.c-out { margin-left: 12px; }
.c-eff { margin-left: 12px; }

/* editing group */
.g-edit .rows { margin-left: 24px; }
.ic-box3 { width: 37px; flex: none; display: flex; justify-content: flex-start; }
.ic-sel { margin-left: 6px; }
.abac { position: relative; height: 30px; }
.abac b { position: absolute; font-weight: 400; line-height: 15px; font-size: 19px; }
.ab { left: 0; top: -2px; color: #8e5cb5; }
.ac { left: 12px; top: 14px; color: #3f7dbf; }
.abac svg { position: absolute; left: 0; top: 17px; }
.c-rep { margin-left: 25px; margin-bottom: 4px; }
.c-sel { margin-left: 11px; margin-bottom: 4px; }
.collapse { position: absolute; left: 2523px; top: 165px; }

/* main area */
.main { height: 1079px; display: flex; background: #e6e6e6; }
.panel { width: 388px; height: 100%; display: flex; border-right: 2px solid #c8c8c8; flex: none; }
.thumbs { width: 349px; padding-top: 26px; }
.t-row { position: relative; height: 177px; display: flex; }
.num { width: 70px; padding-right: 30px; text-align: right; font-size: 29px; line-height: 30px; color: #444; flex: none; margin-top: -7px; height: 40px; }
.num.cur { color: #d24726; }
.thumb { position: relative; width: 241px; height: 137px; border: 2px solid #c6c6c6; background: #fff; padding: 9px; font-family: "Liberation Serif", serif; }
.thumb.selected { outline: 6px solid #720710; border-color: #e0e0e0; }
.t-bars { display: flex; gap: 1px; }
.t-bars i { flex: 1; height: 2px; background: #e58312; }
.t-bars i:nth-child(2) { background: #bd582c; }
.t-bars i:nth-child(3) { background: #94815a; }
.t-head { height: 23px; margin-top: 1px; background: #e58312; color: #f7d6a8; font-size: 7px; line-height: 10px; padding: 11px 0 0 4px; white-space: nowrap; }
.t-head-sans { font-family: "Open Sans", sans-serif; font-size: 5.800px; }
.t-text { color: #777; font-size: 4.200px; line-height: 6px; }
.t-text p { margin-bottom: 2px; }
.t-text b { color: #000; }
.t-text .dot { position: relative; padding-left: 5px; }
.t-text .dot::before { content: ""; position: absolute; left: 0; top: 2px; width: 2px; height: 2px; background: #c0502d; }
.t8 { padding: 27px 0 0 2px; }
.t13 { padding: 11px 0 0 1px; font-size: 4px; line-height: 5px; }
.t13 p { margin-bottom: 1.500px; }

.m-pink { position: absolute; top: 25px; width: 71px; height: 94px; background: #f5dbcf; color: #444; font-size: 5.500px; line-height: 7px; padding: 17px 0 0 11px; white-space: nowrap; }
.mp1 { left: 34px; }
.mp2 { left: 138px; }
.m-big { font-size: 6px; line-height: 6px; margin-bottom: 11.500px; }
.m-type { font-size: 6px; color: #111; text-decoration: underline; line-height: 7px; }
.m-t2 { margin-top: 8px; }
.m-circle { position: absolute; width: 35px; height: 33px; border-radius: 50%; background: linear-gradient(#e79a4a, #bd6b0c 85%); color: #fbe6cf; font-size: 5px; line-height: 5.500px; display: flex; align-items: center; justify-content: center; text-align: center; }
.mc1 { left: 8px; top: 11px; }
.mc2 { left: 116px; top: 10px; width: 32px; height: 35px; }

.t10 { padding-left: 26px; color: #567; }
.t10-h { font-size: 6.800px; line-height: 8px; margin-top: 8px; white-space: nowrap; }
.t10-h2 { margin-top: 5px; }
.band { position: relative; width: 170px; height: 30px; margin-top: 1px; padding: 5px 0 0; background: repeating-linear-gradient(115deg, #e58312 0 16px, #fff 16px 17.500px); clip-path: polygon(0 0, 150px 0, 158px 5px, 158px 9px, 170px 15px, 158px 21px, 158px 25px, 150px 30px, 0 30px); }
.band2 { margin-top: 1px; }
.band-in { width: 158px; height: 20px; background: #fff; border: 1px solid #e58312; font-size: 4px; line-height: 6px; padding-left: 5px; white-space: nowrap; color: #666; }

.t11 { color: #567; padding-top: 9px; }
.t11-r { display: flex; margin-left: 42px; }
.t11-r2 { margin: -2px 0 0 49px; align-items: flex-start; }
.t11-r2 svg { margin-right: -3px; margin-top: -3px; }
.t11-r2 .phase { margin: 6px 0 0 7px; width: 22px; height: 14px; }
.phase { width: 18px; height: 16px; border-radius: 2px; background: linear-gradient(#e0893a, #bd6b0c); color: #fbe6cf; font-size: 3.500px; line-height: 4px; text-align: center; padding-top: 3px; flex: none; font-weight: 700; }
.t11-l { font-size: 5.600px; line-height: 7.200px; margin-left: 6px; white-space: nowrap; }
.t11-r2 .t11-l { margin-top: 1px; }
.t11-n { position: relative; font-size: 3.800px; line-height: 8px; padding-left: 6px; margin-left: 2px; color: #888; }
.t11-n::before { content: ""; position: absolute; left: 0; top: 3px; width: 2px; height: 2px; background: #c0502d; }

.t12 { display: flex; gap: 4.500px; margin: 3px -6px 0 -3px; }
.col { flex: 1; height: 72px; background: #f5dbcf; }
.col h5 { height: 17px; background: linear-gradient(#e0893a, #bd6b0c); color: #fbe6cf; font-size: 5.300px; font-weight: 700; line-height: 6px; text-align: center; padding-top: 2px; }
.col .h-big { font-size: 6.500px; padding-top: 5px; }
.col .h-small { font-size: 4.300px; }
.col p { font-size: 3.800px; line-height: 4.500px; color: #777; padding: 2px 2px 0 5px; }

.vbar { width: 33px; height: 100%; background: #dadada; display: flex; flex-direction: column; }
.vb-btn { height: 32px; background: #fff; border: 1px solid #c6c6c6; display: flex; align-items: center; justify-content: center; flex: none; }
.vb-thumb { height: 96px; margin-top: 111px; background: #fff; border: 1px solid #bdbdbd; flex: none; }
.vb-down { margin-top: auto; margin-bottom: 2px; }

/* slide */
.stage { position: relative; flex: 1; display: flex; padding: 10px 0 0 136px; }
.slide { position: relative; width: 1868px; height: 1051px; background: #fff; border: 1px solid #d4d4d4; font-family: "Liberation Serif", serif; color: #000; flex: none; }
.bars { position: absolute; left: 67px; top: 70px; width: 1731px; display: flex; }
.bars i { height: 15px; }
.b1 { width: 568px; background: #e58312; }
.bars .b2 { width: 567px; margin-left: 14px; height: 14px; background: #bd582c; }
.b3 { width: 567px; margin-left: 15px; background: #94815a; }

.pink { position: absolute; top: 200px; width: 549px; height: 730px; padding: 133px 0 0 88.500px; background: #f5dbcf; }
.pink-l { left: 268px; }
.pink-r { left: 1088px; }
.lead { font-size: 46.700px; line-height: 48px; }
.types { font-size: 46px; line-height: 56px; text-decoration: underline; text-decoration-thickness: 2px; }
.pink-l .types { margin-top: 92px; }
.pink-r .types { margin-top: 149px; }
.list { list-style: none; font-size: 39px; line-height: 55.800px; margin-top: 8px; }
.list u { text-decoration-thickness: 2px; }
.soft { color: #333a2c; }
/* seam between the two stacked boxes of the original slide */
.pink::after { content: ""; position: absolute; left: 0; right: 0; top: 365px; height: 1px; background: #f6dfd3; }

.circle { position: absolute; border-radius: 50%; background: linear-gradient(#e79a4a, #bd6b0c 85%); box-shadow: 0 6px 8px rgba(0, 0, 0, .45); color: #fff; font-size: 40.800px; line-height: 42.500px; display: flex; align-items: center; justify-content: center; text-align: center; }
.circle-l { left: 61px; top: 95px; width: 275px; height: 258px; }
.circle-r { left: 913px; top: 84px; width: 255px; height: 278px; }

.sbar { position: absolute; left: 2138px; top: 0; width: 33px; height: 100%; display: flex; flex-direction: column; align-items: center; background: #e6e6e6; }
.sb-btn { width: 33px; height: 29px; background: #fff; border: 1px solid #c6c6c6; display: flex; align-items: center; justify-content: center; flex: none; margin-top: 2px; }
.sb-thumb { width: 33px; height: 34px; margin-top: 112px; background: #fff; border: 1px solid #bdbdbd; flex: none; }
.sb-down { margin-top: 762px; }
.sb-pg { margin-top: 13px; }
.sb-pg2 { margin-top: 20px; }

/* status bar */
.status { position: relative; height: 45px; display: flex; align-items: center; background: #f3f3f3; border-top: 2px solid #c8c8c8; border-bottom: 2px solid #3c3c3c; font-size: 20px; color: #444; white-space: nowrap; }
.st-count, .st-lang, .st-acc-t { padding-top: 3px; }
.st-count { margin-left: 15px; }
.st-notes { margin-left: 36px; margin-top: -4px; }
.st-lang { margin-left: 35px; }
.st-acc { margin-left: 32px; }
.st-acc-t { margin-left: 3px; }
.views { position: absolute; left: 1849px; top: 0; height: 41px; display: flex; }
.view { width: 80px; display: flex; align-items: center; justify-content: center; }
.view.on { background: #c6c6c6; }
.zoomer { position: absolute; left: 2181px; top: 0; height: 41px; display: flex; align-items: center; }
.z-minus { width: 15px; height: 2px; background: #333; }
.z-track { position: relative; width: 197px; height: 4px; margin-left: 12px; background: #333; }
.z-thumb { position: absolute; left: 66px; top: -11px; width: 10px; height: 22px; background: #6a6a6a; }
.z-tick { position: absolute; left: 98px; top: -8px; width: 1.500px; height: 20px; background: #333; }
.z-plus { margin-left: 12px; }
.z-pct { margin-left: 26px; font-size: 20px; }
.z-fit { margin-left: 32px; }

.sharebar { position: absolute; left: 1128px; top: -1px; height: 44px; display: flex; box-shadow: 4px 0 8px rgba(0, 0, 0, .25); }
.sb-green { position: relative; width: 514px; background: #22d95c; border-radius: 4px 0 0 0; display: flex; align-items: center; }
.sg-arrow { margin-left: 15px; }
.sg-text { margin-left: 60px; font-size: 23px; font-weight: 700; color: #1d1d4e; }
.sg-cloud { margin-left: 70px; }
.sg-shield { margin-left: 20px; }
.sb-red { width: 179px; background: #ff3b41; color: #fff; font-size: 24px; display: flex; align-items: center; padding-left: 15px; border-radius: 0 4px 0 0; }
.stop-sq { width: 16px; height: 16px; margin-right: 11px; background: #fff; border-radius: 2px; }
```
